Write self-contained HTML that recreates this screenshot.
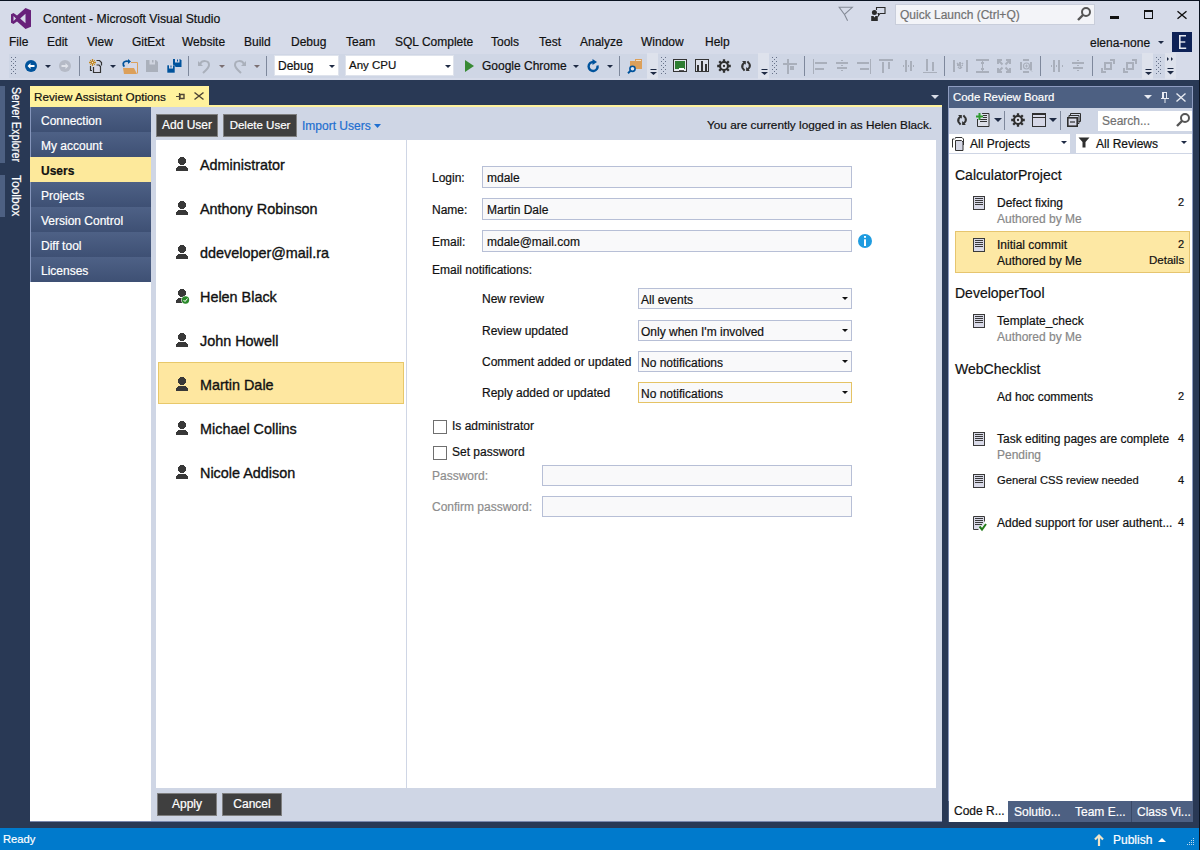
<!DOCTYPE html>
<html><head><meta charset="utf-8">
<style>
*{box-sizing:border-box;margin:0;padding:0}
html,body{width:1200px;height:850px;overflow:hidden}
body{-webkit-text-stroke:0.2px currentColor;position:relative;background:#293955;font-family:"Liberation Sans",sans-serif;font-size:12px;color:#111}
.a{position:absolute}
.t{position:absolute;white-space:nowrap;line-height:1}
svg{position:absolute;overflow:visible}
.menu{top:36px}
.tb{top:54px;height:24px;background:#cfd6e5}
.btn{position:absolute;background:#3f3f3f;border:1px solid #7f7f7f;color:#fff;font-size:12px;text-align:center}
.nav{position:absolute;left:31px;width:120px;height:25px;background:linear-gradient(#4e6186,#3e5074);color:#fff;font-size:12px}
.nav span{position:absolute;left:10px;top:8px;line-height:1;white-space:nowrap}
.uname{position:absolute;left:200px;font-size:14.4px;line-height:1;white-space:nowrap;-webkit-text-stroke:0.35px currentColor}
.lbl{position:absolute;font-size:12px;line-height:1;white-space:nowrap}
.tbox{position:absolute;left:482px;width:370px;height:22px;border:1px solid #b7bfd6;background:#f9f9fa}
.tbox span{position:absolute;left:4px;top:5px;line-height:1;font-size:12px;white-space:nowrap}
.dd{position:absolute;left:638px;width:214px;height:21px;border:1px solid #b7bfd6;background:#f9f9fa}
.dd span{position:absolute;left:2px;top:5px;line-height:1;font-size:12px;white-space:nowrap}
.dd i{position:absolute;left:203px;top:8px;width:0;height:0;border-left:3px solid transparent;border-right:3px solid transparent;border-top:3px solid #111}
.chk{position:absolute;left:433px;width:14px;height:14px;border:1px solid #6f6f6f;background:#fff}
.crbt{position:absolute;font-size:12px;line-height:1;white-space:nowrap}
.gray{color:#888}
.num{position:absolute;left:1178px;font-size:11px;line-height:1}
.arr{position:absolute;width:0;height:0;border-left:3px solid transparent;border-right:3px solid transparent;border-top:3px solid #1e2a44}
.sep{position:absolute;top:56px;width:1px;height:20px;background:#7e889c}
.grip{position:absolute;top:57px;width:6px;height:17px;background-image:radial-gradient(circle,#5f6f8c 0.8px,transparent 1px);background-size:2px 4px}
.dis{color:#a7adba}
</style></head><body>
<svg width="0" height="0" style="position:absolute">
 <defs>
  <symbol id="user" viewBox="0 0 13 15"><path d="M4 0H8V1H9V2H10V6H9V7H8V8H4V7H3V6H2V2H3V1H4Z M2 9H10V10H11V11H12V14H0V11H1V10H2Z" fill="#383838"/></symbol>
  <symbol id="doc" viewBox="0 0 13 15"><rect x="0.5" y="0.5" width="11" height="13" fill="#d9dae8" stroke="#3a3a3a"/><path d="M2 2.5h8M2 4.5h8M2 6.5h8M2 8.5h8" stroke="#3a3a3a"/></symbol>
 </defs>
</svg>

<!-- title & menu -->
<div class="a" style="left:0;top:0;width:1200px;height:80px;background:#d6dbe9"></div>
<div class="a" style="left:0;top:0;width:1200px;height:1px;background:#0a1220"></div>
<svg style="left:11px;top:8px" width="21" height="21" viewBox="0 0 21 21"><path d="M14.5 0 L20 2.2 V18.8 L14.5 21 L6 13.5 L2.5 16 L0 14.8 V6.2 L2.5 5 L6 7.5 Z M14.5 5.8 L9.2 10.5 L14.5 15.2 Z M2.5 8 V13 L5 10.5 Z" fill="#68217a" fill-rule="evenodd"/></svg>
<div class="t" style="left:43px;top:13px;font-size:12.2px">Content - Microsoft Visual Studio</div>

<div class="t menu" style="left:9px">File</div>
<div class="t menu" style="left:47px">Edit</div>
<div class="t menu" style="left:87px">View</div>
<div class="t menu" style="left:132px">GitExt</div>
<div class="t menu" style="left:182px">Website</div>
<div class="t menu" style="left:244px">Build</div>
<div class="t menu" style="left:291px">Debug</div>
<div class="t menu" style="left:346px">Team</div>
<div class="t menu" style="left:395px">SQL Complete</div>
<div class="t menu" style="left:491px">Tools</div>
<div class="t menu" style="left:539px">Test</div>
<div class="t menu" style="left:580px">Analyze</div>
<div class="t menu" style="left:641px">Window</div>
<div class="t menu" style="left:705px">Help</div>

<!-- title right icons -->
<svg style="left:838px;top:6px" width="16" height="16" viewBox="0 0 16 16"><path d="M1.2 1.3H14.3L6.5 8.5ZM6.5 8.5L9.6 14.8" fill="none" stroke="#858b97" stroke-width="1.1"/></svg>
<svg style="left:870px;top:6px" width="17" height="16" viewBox="0 0 17 16"><path d="M6.5 4V1.5H15V7.5H10L8.5 9.5V7.5H7.5" fill="none" stroke="#2a2a2a" stroke-width="1.1"/><circle cx="4.4" cy="6.4" r="2.5" fill="#2a2a2a"/><path d="M1.2 10h2.3l1 1.5l1-1.5h2.3v5h-6.6z" fill="#2a2a2a"/></svg>
<div class="a" style="left:895px;top:4px;width:200px;height:21px;background:#f3f4f8;border:1px solid #c9cedb"></div>
<div class="t" style="left:900px;top:9px;color:#717171">Quick Launch (Ctrl+Q)</div>
<svg style="left:1077px;top:7px" width="14" height="14" viewBox="0 0 14 14"><circle cx="9" cy="5" r="4" fill="none" stroke="#555" stroke-width="2"/><path d="M6 8L1 13" stroke="#555" stroke-width="2.4"/></svg>
<div class="a" style="left:1110px;top:16px;width:9px;height:3px;background:#111"></div>
<div class="a" style="left:1144px;top:10px;width:9px;height:9px;border:1px solid #111;border-top-width:2px"></div>
<svg style="left:1177px;top:11px" width="10" height="8" viewBox="0 0 10 8"><path d="M0.5 0.3L9.5 7.7M9.5 0.3L0.5 7.7" stroke="#111" stroke-width="1.4"/></svg>

<div class="t" style="left:1090px;top:37px">elena-none</div>
<div class="arr" style="left:1158px;top:41px"></div>
<div class="a" style="left:1172px;top:32px;width:20px;height:20px;background:#0e2257"></div>
<svg style="left:1179px;top:35px" width="8" height="14" viewBox="0 0 8 14" fill="#e4e7ef"><rect x="0" y="0" width="1.6" height="14"/><rect x="0" y="0" width="7" height="1.5"/><rect x="0" y="6.3" width="6.3" height="1.4"/><rect x="0" y="12.5" width="7.2" height="1.5"/></svg>

<!-- toolbars -->
<div class="a tb" style="left:9px;width:638px"></div>
<div class="a" style="left:647px;top:53px;width:11px;height:26px;background:#dee2ec"></div>
<div class="a tb" style="left:658px;width:100px"></div>
<div class="a" style="left:758px;top:53px;width:11px;height:26px;background:#dee2ec"></div>
<div class="a tb" style="left:769px;width:373px"></div>
<div class="a" style="left:1142px;top:53px;width:11px;height:26px;background:#dee2ec"></div>
<div class="a tb" style="left:1153px;width:12px"></div>
<div class="a" style="left:1165px;top:53px;width:11px;height:26px;background:#dee2ec"></div>

<svg style="left:11px;top:57px" width="6" height="17" viewBox="0 0 6 17" fill="#67728a"><rect x="0" y="0" width="1" height="1"/><rect x="4" y="0" width="1" height="1"/><rect x="2" y="2" width="1" height="1"/><rect x="0" y="4" width="1" height="1"/><rect x="4" y="4" width="1" height="1"/><rect x="2" y="6" width="1" height="1"/><rect x="0" y="8" width="1" height="1"/><rect x="4" y="8" width="1" height="1"/><rect x="2" y="10" width="1" height="1"/><rect x="0" y="12" width="1" height="1"/><rect x="4" y="12" width="1" height="1"/><rect x="2" y="14" width="1" height="1"/><rect x="0" y="16" width="1" height="1"/><rect x="4" y="16" width="1" height="1"/></svg>
<svg style="left:661px;top:57px" width="6" height="17" viewBox="0 0 6 17" fill="#67728a"><rect x="0" y="0" width="1" height="1"/><rect x="4" y="0" width="1" height="1"/><rect x="2" y="2" width="1" height="1"/><rect x="0" y="4" width="1" height="1"/><rect x="4" y="4" width="1" height="1"/><rect x="2" y="6" width="1" height="1"/><rect x="0" y="8" width="1" height="1"/><rect x="4" y="8" width="1" height="1"/><rect x="2" y="10" width="1" height="1"/><rect x="0" y="12" width="1" height="1"/><rect x="4" y="12" width="1" height="1"/><rect x="2" y="14" width="1" height="1"/><rect x="0" y="16" width="1" height="1"/><rect x="4" y="16" width="1" height="1"/></svg>
<svg style="left:772px;top:57px" width="6" height="17" viewBox="0 0 6 17" fill="#67728a"><rect x="0" y="0" width="1" height="1"/><rect x="4" y="0" width="1" height="1"/><rect x="2" y="2" width="1" height="1"/><rect x="0" y="4" width="1" height="1"/><rect x="4" y="4" width="1" height="1"/><rect x="2" y="6" width="1" height="1"/><rect x="0" y="8" width="1" height="1"/><rect x="4" y="8" width="1" height="1"/><rect x="2" y="10" width="1" height="1"/><rect x="0" y="12" width="1" height="1"/><rect x="4" y="12" width="1" height="1"/><rect x="2" y="14" width="1" height="1"/><rect x="0" y="16" width="1" height="1"/><rect x="4" y="16" width="1" height="1"/></svg>
<svg style="left:1156px;top:57px" width="6" height="17" viewBox="0 0 6 17" fill="#67728a"><rect x="0" y="0" width="1" height="1"/><rect x="4" y="0" width="1" height="1"/><rect x="2" y="2" width="1" height="1"/><rect x="0" y="4" width="1" height="1"/><rect x="4" y="4" width="1" height="1"/><rect x="2" y="6" width="1" height="1"/><rect x="0" y="8" width="1" height="1"/><rect x="4" y="8" width="1" height="1"/><rect x="2" y="10" width="1" height="1"/><rect x="0" y="12" width="1" height="1"/><rect x="4" y="12" width="1" height="1"/><rect x="2" y="14" width="1" height="1"/><rect x="0" y="16" width="1" height="1"/><rect x="4" y="16" width="1" height="1"/></svg>

<!-- tb1 icons -->
<svg style="left:25px;top:60px" width="12" height="12" viewBox="0 0 12 12"><circle cx="6" cy="6" r="6" fill="#00539c"/><path d="M2.5 6L5.5 3V5H9.5V7H5.5V9z" fill="#fff"/></svg>
<div class="arr" style="left:45px;top:65px"></div>
<svg style="left:59px;top:60px" width="12" height="12" viewBox="0 0 12 12"><circle cx="6" cy="6" r="6" fill="#b5bac6"/><path d="M9.5 6L6.5 3V5H2.5V7H6.5V9z" fill="#e0e3ea"/></svg>
<div class="sep" style="left:79px"></div>
<svg style="left:89px;top:59px" width="14" height="15" viewBox="0 0 14 15"><path d="M3.5 0v7M0 3.5h7" stroke="#c4861c" stroke-width="1.3"/><circle cx="3.5" cy="3.5" r="1.8" fill="#c4861c"/><circle cx="3.5" cy="3.5" r="0.7" fill="#e8e8ee"/><path d="M1.2 1.2l0.6 0.6M5.8 1.2l-0.6 0.6M1.2 5.8l0.6-0.6M5.8 5.8l-0.6-0.6" stroke="#c4861c" stroke-width="1.2"/><path d="M7.5 1.5H10.5L12.5 3.5V6.5" fill="none" stroke="#333" stroke-width="1.2"/><path d="M1.5 7V11.5H3" fill="none" stroke="#333" stroke-width="1.2"/><path d="M4.5 8V13.5H11.5V7.5L10 6H7.5" fill="#d6d8e6" stroke="#333" stroke-width="1.2"/></svg>
<div class="arr" style="left:110px;top:65px"></div>
<svg style="left:122px;top:59px" width="16" height="15" viewBox="0 0 16 15"><path d="M6 3.5h9.5v11h-9.5z" fill="#d6d8e6"/><path d="M9 3.5h6.5v11" fill="none" stroke="#dca05a"/><path d="M1 9h11l3 6h-13z" fill="#dca05a"/><path d="M2.5 7.5C0.5 6 1 3 3 2.5C4.5 1.8 6 2.2 7 2.5" fill="none" stroke="#00539c" stroke-width="1.8"/><path d="M6 0l3 2.5l-3 2.5z" fill="#00539c"/></svg>
<svg style="left:146px;top:60px" width="12" height="12" viewBox="0 0 12 12"><path d="M0 0h10l2 2v10h-12z" fill="#aab0bb"/><path d="M3.5 0h5.5v4.5h-5.5z" fill="#d0d5e0"/><path d="M6 0h1.5v2.5h-1.5z" fill="#aab0bb"/></svg>
<svg style="left:167px;top:59px" width="15" height="15" viewBox="0 0 15 15"><path d="M6 0h7l1.5 1.5v6.5h-8.5z" fill="#00539c"/><path d="M8 0h4.5v3.5h-4.5z" fill="#d6d8e6"/><path d="M10 0.5h1v2h-1z" fill="#00539c"/><path d="M0 6h6.5l1.5 1.5v6.5h-8z" fill="#00539c" stroke="#d6dbe9" stroke-width="0.6"/><path d="M2 6h4v3.5h-4z" fill="#d6d8e6"/><path d="M3.5 6.5h1v2h-1z" fill="#00539c"/></svg>
<div class="sep" style="left:188px"></div>
<svg style="left:198px;top:59px" width="13" height="15" viewBox="0 0 13 15"><path d="M2 5C4 1 11 1 11 6C11 9 8 11 5 14" fill="none" stroke="#aab0bb" stroke-width="2"/><path d="M0 2l0 5l5 0z" fill="#aab0bb"/></svg>
<div class="arr" style="left:219px;top:65px;border-top-color:#7b6f72"></div>
<svg style="left:233px;top:59px" width="13" height="15" viewBox="0 0 13 15"><path d="M11 5C9 1 2 1 2 6C2 9 5 11 8 14" fill="none" stroke="#aab0bb" stroke-width="2"/><path d="M13 2l0 5l-5 0z" fill="#aab0bb"/></svg>
<div class="arr" style="left:254px;top:65px;border-top-color:#7b6f72"></div>
<div class="sep" style="left:266px"></div>

<div class="a" style="left:274px;top:55px;width:65px;height:21px;background:#fff;border:1px solid #dfe3ec"></div>
<div class="t" style="left:278px;top:60px">Debug</div>
<div class="arr" style="left:329px;top:65px"></div>
<div class="a" style="left:345px;top:55px;width:109px;height:21px;background:#fff;border:1px solid #dfe3ec"></div>
<div class="t" style="left:349px;top:60px;font-size:11.5px">Any CPU</div>
<div class="arr" style="left:445px;top:65px"></div>

<svg style="left:465px;top:60px" width="9" height="12" viewBox="0 0 9 12"><path d="M0 0L9 6L0 12z" fill="#388a34"/></svg>
<div class="t" style="left:482px;top:60px">Google Chrome</div>
<div class="arr" style="left:573px;top:65px"></div>
<svg style="left:587px;top:59px" width="13" height="14" viewBox="0 0 13 14"><path d="M10.5 6.5A4.5 4.5 0 1 1 6.5 3" fill="none" stroke="#00539c" stroke-width="2.4"/><path d="M5.5 0l4.5 3l-4.5 3z" fill="#00539c"/></svg>
<div class="arr" style="left:607px;top:65px"></div>
<div class="sep" style="left:619px"></div>
<svg style="left:627px;top:59px" width="16" height="15" viewBox="0 0 16 15"><path d="M3 2h5v-2h7v10h-12z" fill="#dca05a"/><path d="M9 1.5h5" stroke="#f3e0c6"/><circle cx="5.5" cy="9.8" r="2.6" fill="#e2e5ee" stroke="#00539c" stroke-width="1.6"/><path d="M3.6 11.8L1 14.3" stroke="#00539c" stroke-width="1.9"/></svg>
<svg style="left:650px;top:69px" width="7" height="7" viewBox="0 0 7 7"><path d="M0.5 0.5h6" stroke="#1e2a44"/><path d="M0 3h7l-3.5 3z" fill="#1e2a44"/></svg>

<!-- tb2 -->
<svg style="left:673px;top:59px" width="14" height="13" viewBox="0 0 14 13"><rect x="0.5" y="0.5" width="13" height="12" fill="#e4e7ee" stroke="#333"/><rect x="2" y="2" width="10" height="8" fill="#2e7d32"/><rect x="6" y="9" width="5" height="2" fill="#fff"/><path d="M6 11.5h5" stroke="#333" stroke-width="0.8"/></svg>
<svg style="left:695px;top:59px" width="14" height="13" viewBox="0 0 14 13"><rect x="0.5" y="0.5" width="13" height="12" fill="#dcdfe8" stroke="#333"/><path d="M2 6h2v6h-2zM6 2h2v10h-2zM10 5h2v7h-2z" fill="#333"/></svg>
<svg style="left:717px;top:59px" width="14" height="14" viewBox="0 0 14 14"><circle cx="7" cy="7" r="5" fill="#2f2f2f"/><path d="M7 0.2v3M7 10.8v3M0.2 7h3M10.8 7h3M2.2 2.2l2 2M11.8 11.8l-2-2M11.8 2.2l-2 2M2.2 11.8l2-2" stroke="#2f2f2f" stroke-width="2.3"/><circle cx="7" cy="7" r="2.9" fill="#dde0ea"/><circle cx="7" cy="7" r="1.15" fill="#2f2f2f"/></svg>
<svg style="left:741px;top:61px" width="11" height="11" viewBox="0 0 11 11"><path d="M3.6 1.5Q0.3 4 1.4 6.8L3.6 9.6" fill="none" stroke="#333" stroke-width="2"/><path d="M1 0H4.8V3.8Z" fill="#333"/><path d="M6.4 0.4L8.6 3.2Q9.8 6 6.4 8.6" fill="none" stroke="#333" stroke-width="2"/><path d="M5.1 6.1V9.9H8.9Z" fill="#333"/></svg>
<svg style="left:761px;top:69px" width="7" height="7" viewBox="0 0 7 7"><path d="M0.5 0.5h6" stroke="#1e2a44"/><path d="M0 3h7l-3.5 3z" fill="#1e2a44"/></svg>

<!-- tb3 layout icons (disabled) -->
<svg style="left:0;top:0" width="1200" height="80" viewBox="0 0 1200 80" fill="#a9afbb">
 <path d="M787 59h2v15h-2zM783 63h14v2h-14zM790 66h4v4h-4z"/>
 <rect x="804" y="56" width="1" height="20" fill="#7e889c"/>
 <path d="M813 59h1v15h-1zM815 62h12v2h-12zM815 68h9v2h-9z"/>
 <path d="M836 62h12v2h-12zM837 67h10v2h-10zM841 60h2v1h-2zM841 65h2v1h-2zM841 70h2v1h-2z"/>
 <path d="M857 62h12v2h-12zM860 68h9v2h-9zM870 59h1v15h-1z"/>
 <path d="M879 59h14v2h-14zM882 62h2v11h-2zM888 62h2v7h-2z"/>
 <path d="M905 60h2v12h-2zM910 61h2v10h-2zM903 65h1v2h-1zM908 65h1v2h-1zM913 65h1v2h-1z"/>
 <path d="M926 59h2v12h-2zM932 62h2v9h-2zM923 72h14v1h-14z"/>
 <rect x="944" y="56" width="1" height="20" fill="#7e889c"/>
 <path d="M953 60h2v12h-2zM966 60h2v12h-2zM959 62h2v7h-2zM957 64h6v2h-6zM957.5 62.5l5 5l-1 1l-5-5zM962.5 62.5l-5 5l1 1l5-5z"/>
 <path d="M976 59h13v2h-13zM976 71h13v2h-13zM982 61h1v10h-1zM981 62h3v2h-3zM981 68h3v2h-3z"/>
 <path d="M997 59h5v2h-3v3h-2zM1011 59h-5v2h3v3h2zM997 73h5v-2h-3v-3h-2zM1011 73h-5v-2h3v-3h2z"/><path d="M999 61l3.5 3.5M1009 61l-3.5 3.5M999 71l3.5-3.5M1009 71l-3.5-3.5" stroke="#a9afbb" stroke-width="2"/>
 <path d="M1023 59h6v2h-6zM1023 71h6v2h-6zM1020 62h2v8h-2zM1030 62h2v8h-2z"/>
 <circle cx="1026.5" cy="66" r="3" fill="none" stroke="#a9afbb" stroke-width="1.2"/><path d="M1026.5 64.5v3M1025 66h3M1029 68.5l3 3" stroke="#a9afbb"/>
 <rect x="1040" y="56" width="1" height="20" fill="#7e889c"/>
 <path d="M1053 60h2v12h-2zM1058 60h2v12h-2zM1051 65h1v2h-1zM1056 65h1v2h-1zM1062 65h1v2h-1z"/>
 <path d="M1072 62h12v2h-12zM1073 67h10v2h-10zM1077 60h2v1h-2zM1077 65h2v1h-2zM1077 70h2v1h-2z"/>
 <rect x="1092" y="56" width="1" height="20" fill="#7e889c"/>
 <path d="M1104 62h8v8h-8zM1106 64v4h4v-4zM1110 59h5v5h-2v-3h-3zM1101 68h2v3h3v2h-5z"/>
 <path d="M1126 62h8v8h-8zM1128 64v4h4v-4zM1132 59h5v5h-2v-3h-3zM1123 68h2v3h3v2h-5z"/>
</svg>
<svg style="left:1145px;top:69px" width="7" height="7" viewBox="0 0 7 7"><path d="M0.5 0.5h6" stroke="#1e2a44"/><path d="M0 3h7l-3.5 3z" fill="#1e2a44"/></svg>
<svg style="left:1167px;top:57px" width="7" height="18" viewBox="0 0 7 18"><path d="M0 0l2 2l-2 2zM4 0l2 2l-2 2z" fill="#1e2a44"/><path d="M0.5 11.5h6" stroke="#1e2a44"/><path d="M0 14h7l-3.5 3.5z" fill="#1e2a44"/></svg>

<!-- left sidebar -->
<div class="a" style="left:0;top:86px;width:5px;height:77px;background:#4d6082"></div>
<div class="a" style="left:0;top:175px;width:5px;height:42px;background:#4d6082"></div>
<div class="t" style="left:22px;top:87px;color:#fff;transform-origin:0 0;transform:rotate(90deg) scaleX(0.9)">Server Explorer</div>
<div class="t" style="left:22px;top:175px;color:#fff;transform-origin:0 0;transform:rotate(90deg)">Toolbox</div>

<!-- doc tab -->
<div class="a" style="left:30px;top:86px;width:179px;height:21px;background:#fff29d"></div>
<div class="a" style="left:30px;top:105px;width:912px;height:2px;background:#fff29d"></div>
<div class="t" style="left:34px;top:91px;font-size:11.7px">Review Assistant Options</div>
<svg style="left:176px;top:93px" width="9" height="7" viewBox="0 0 9 7"><path d="M0 3.5h3.5M3.5 0v7" fill="none" stroke="#4f4636" stroke-width="1.2"/><path d="M4 1.5h4v4h-4z" fill="none" stroke="#4f4636" stroke-width="1.4"/></svg>
<svg style="left:194px;top:92px" width="10" height="8" viewBox="0 0 10 8"><path d="M0.5 0.5L9.5 7.5M9.5 0.5L0.5 7.5" stroke="#4f4636" stroke-width="1.5"/></svg>
<svg style="left:931px;top:95px" width="8" height="4" viewBox="0 0 8 4"><path d="M0 0h8l-4 4z" fill="#d8dce6"/></svg>

<!-- doc content -->
<div class="a" style="left:30px;top:107px;width:912px;height:715px;background:#cfd6e5;border-bottom:1px solid #7a88ad"></div>
<div class="a" style="left:30px;top:107px;width:1px;height:175px;background:#8595bb"></div>
<div class="a" style="left:30px;top:282px;width:121px;height:539px;background:#fff"></div>
<div class="nav" style="top:107px"><span>Connection</span></div>
<div class="nav" style="top:132px"><span>My account</span></div>
<div class="nav" style="top:157px;left:30px;width:121px;background:#fde99b;color:#111;font-weight:bold"><span style="left:11px">Users</span></div>
<div class="nav" style="top:182px"><span>Projects</span></div>
<div class="nav" style="top:207px"><span>Version Control</span></div>
<div class="nav" style="top:232px"><span>Diff tool</span></div>
<div class="nav" style="top:257px"><span>Licenses</span></div>

<div class="btn" style="left:156px;top:114px;width:62px;height:23px;line-height:21px">Add User</div>
<div class="btn" style="left:223px;top:114px;width:74px;height:23px;line-height:21px;font-size:11.5px">Delete User</div>
<div class="t" style="left:302px;top:120px;color:#1e6fd0">Import Users</div>
<svg style="left:374px;top:124px" width="7" height="4" viewBox="0 0 7 4"><path d="M0 0h7l-3.5 4z" fill="#1e6fd0"/></svg>
<div class="t" style="left:707px;top:120px;font-size:11.8px">You are currently logged in as Helen Black.</div>

<div class="a" style="left:156px;top:140px;width:250px;height:648px;background:#fff"></div>
<div class="a" style="left:407px;top:140px;width:529px;height:648px;background:#fff"></div>

<div class="a" style="left:158px;top:362px;width:246px;height:42px;background:#fee7a0;border:1px solid #e8c86a"></div>
<svg style="left:176px;top:157px" width="13" height="15"><use href="#user"/></svg>
<svg style="left:176px;top:201px" width="13" height="15"><use href="#user"/></svg>
<svg style="left:176px;top:245px" width="13" height="15"><use href="#user"/></svg>
<svg style="left:176px;top:289px" width="13" height="15" viewBox="0 0 13 15"><path d="M4 0H8V1H9V2H10V6H9V7H8V8H4V7H3V6H2V2H3V1H4Z M2 9H10V10H11V11H12V14H0V11H1V10H2Z" fill="#383838"/><circle cx="9.5" cy="11" r="4.3" fill="#fff"/><circle cx="9.5" cy="11" r="3.7" fill="#2a8a2a"/><path d="M7.5 11l1.5 1.5l2.5-3" fill="none" stroke="#fff" stroke-width="1"/></svg>
<svg style="left:176px;top:333px" width="13" height="15"><use href="#user"/></svg>
<svg style="left:176px;top:377px" width="13" height="15"><use href="#user"/></svg>
<svg style="left:176px;top:421px" width="13" height="15"><use href="#user"/></svg>
<svg style="left:176px;top:465px" width="13" height="15"><use href="#user"/></svg>
<div class="uname" style="top:158px">Administrator</div>
<div class="uname" style="top:202px">Anthony Robinson</div>
<div class="uname" style="top:246px">ddeveloper@mail.ra</div>
<div class="uname" style="top:290px">Helen Black</div>
<div class="uname" style="top:334px">John Howell</div>
<div class="uname" style="top:378px">Martin Dale</div>
<div class="uname" style="top:422px">Michael Collins</div>
<div class="uname" style="top:466px">Nicole Addison</div>

<!-- form -->
<div class="lbl" style="left:432px;top:172px">Login:</div>
<div class="tbox" style="top:166px"><span>mdale</span></div>
<div class="lbl" style="left:432px;top:204px">Name:</div>
<div class="tbox" style="top:198px"><span>Martin Dale</span></div>
<div class="lbl" style="left:432px;top:236px">Email:</div>
<div class="tbox" style="top:230px"><span>mdale@mail.com</span></div>
<svg style="left:858px;top:234px" width="14" height="14" viewBox="0 0 14 14"><circle cx="7" cy="7" r="7" fill="#1f9ce0"/><rect x="6" y="5.3" width="2" height="6.7" fill="#fff"/><rect x="6" y="2" width="2" height="1.8" fill="#fff"/></svg>
<div class="lbl" style="left:432px;top:264px">Email notifications:</div>

<div class="lbl" style="left:482px;top:293px">New review</div>
<div class="dd" style="top:288px"><span>All events</span><i></i></div>
<div class="lbl" style="left:482px;top:325px">Review updated</div>
<div class="dd" style="top:320px"><span>Only when I'm involved</span><i></i></div>
<div class="lbl" style="left:482px;top:356px">Comment added or updated</div>
<div class="dd" style="top:351px"><span>No notifications</span><i></i></div>
<div class="lbl" style="left:482px;top:387px">Reply added or updated</div>
<div class="dd" style="top:382px;border-color:#e5c365"><span>No notifications</span><i></i></div>

<div class="chk" style="top:420px"></div>
<div class="lbl" style="left:452px;top:420px">Is administrator</div>
<div class="chk" style="top:446px"></div>
<div class="lbl" style="left:452px;top:446px">Set password</div>
<div class="lbl" style="left:432px;top:470px;color:#8d8d8d">Password:</div>
<div class="a" style="left:542px;top:465px;width:310px;height:21px;border:1px solid #b7bfd6;background:#f9f9fa"></div>
<div class="lbl" style="left:432px;top:501px;color:#8d8d8d">Confirm password:</div>
<div class="a" style="left:542px;top:496px;width:310px;height:21px;border:1px solid #b7bfd6;background:#f9f9fa"></div>

<div class="btn" style="left:157px;top:793px;width:60px;height:23px;line-height:21px">Apply</div>
<div class="btn" style="left:222px;top:793px;width:60px;height:23px;line-height:21px">Cancel</div>

<!-- code review board -->
<div class="a" style="left:948px;top:86px;width:245px;height:716px;background:#8e9cc0"></div><div class="a" style="left:949px;top:87px;width:243px;height:21px;background:#4d6082"></div><div class="a" style="left:948px;top:801px;width:245px;height:21px;background:#4d6082"></div>
<div class="t" style="left:953px;top:92px;color:#fff;font-size:11.4px">Code Review Board</div>
<svg style="left:1144px;top:95px" width="8" height="4" viewBox="0 0 8 4"><path d="M0 0h8l-4 4z" fill="#e8ebf2"/></svg>
<svg style="left:1161px;top:92px" width="8" height="12" viewBox="0 0 8 12"><path d="M1 0h5v6h-1v-5h-2v5h-2z" fill="#e8ebf2"/><path d="M0 6h8v1h-8zM3.5 7h1v4h-1z" fill="#e8ebf2"/></svg>
<svg style="left:1176px;top:93px" width="10" height="9" viewBox="0 0 10 9"><path d="M0.5 0.5L9.5 8.5M9.5 0.5L0.5 8.5" stroke="#e8ebf2" stroke-width="1.4"/></svg>
<div class="a" style="left:949px;top:108px;width:243px;height:26px;background:#cfd6e5"></div>
<svg style="left:957px;top:115px" width="11" height="11" viewBox="0 0 11 11"><path d="M3.6 1.5Q0.3 4 1.4 6.8L3.6 9.6" fill="none" stroke="#333" stroke-width="2"/><path d="M1 0H4.8V3.8Z" fill="#333"/><path d="M6.4 0.4L8.6 3.2Q9.8 6 6.4 8.6" fill="none" stroke="#333" stroke-width="2"/><path d="M5.1 6.1V9.9H8.9Z" fill="#333"/></svg>
<svg style="left:976px;top:113px" width="14" height="14" viewBox="0 0 14 14"><path d="M1.5 6v7.5h11.5v-13h-7" fill="#dcdfe8" stroke="#333"/><path d="M1.5 6h5v-5.5" fill="#dcdfe8"/><path d="M7 2.5h4M7 4.5h4M4 6.5h7M4 8.5h7" stroke="#333"/><path d="M3.5 0v7M0 3.5h7" stroke="#2e9a2e" stroke-width="2"/></svg>
<svg style="left:994px;top:118px" width="8" height="4" viewBox="0 0 8 4"><path d="M0 0h8l-4 4z" fill="#1e2a44"/></svg>
<div class="a" style="left:1004px;top:111px;width:1px;height:19px;background:#7e889c"></div>
<svg style="left:1011px;top:113px" width="14" height="14" viewBox="0 0 14 14"><circle cx="7" cy="7" r="5" fill="#2f2f2f"/><path d="M7 0.2v3M7 10.8v3M0.2 7h3M10.8 7h3M2.2 2.2l2 2M11.8 11.8l-2-2M11.8 2.2l-2 2M2.2 11.8l2-2" stroke="#2f2f2f" stroke-width="2.3"/><circle cx="7" cy="7" r="2.9" fill="#dde0ea"/><circle cx="7" cy="7" r="1.15" fill="#2f2f2f"/></svg>
<svg style="left:1032px;top:113px" width="15" height="14" viewBox="0 0 15 14"><rect x="0.5" y="0.5" width="13" height="13" fill="#d6d8e6" stroke="#2f2f2f"/><rect x="0" y="0" width="14" height="2" fill="#2f2f2f"/><path d="M0.5 4.5h13" stroke="#2f2f2f"/></svg>
<svg style="left:1049px;top:118px" width="8" height="4" viewBox="0 0 8 4"><path d="M0 0h8l-4 4z" fill="#1e2a44"/></svg>
<div class="a" style="left:1060px;top:111px;width:1px;height:19px;background:#7e889c"></div>
<svg style="left:1067px;top:113px" width="15" height="14" viewBox="0 0 15 14"><path d="M3.5 2.5v-2h10v8h-2M2 4v-1.5h10v8h-1" fill="none" stroke="#2f2f2f"/><rect x="0.8" y="4.8" width="9.4" height="8.4" fill="#d6d8e6" stroke="#2f2f2f" stroke-width="1.6"/><path d="M3 9h5" stroke="#2f2f2f" stroke-width="1.2"/></svg>
<div class="a" style="left:1098px;top:111px;width:94px;height:20px;background:#fff"></div>
<div class="t" style="left:1102px;top:115px;color:#717171">Search...</div>
<svg style="left:1176px;top:113px" width="14" height="14" viewBox="0 0 14 14"><circle cx="9" cy="5" r="4" fill="none" stroke="#555" stroke-width="2"/><path d="M6 8L1 13" stroke="#555" stroke-width="2.4"/></svg>
<div class="a" style="left:949px;top:134px;width:243px;height:20px;background:#cfd6e5"></div>
<div class="a" style="left:949px;top:134px;width:121px;height:19px;background:#fff"></div>
<div class="a" style="left:1076px;top:134px;width:116px;height:19px;background:#fff"></div>
<svg style="left:952px;top:137px" width="13" height="14" viewBox="0 0 13 14"><path d="M0.5 10.5v-8.5h2M3.5 1.5v-1h6.5l1.5 1.5v6" fill="none" stroke="#333"/><path d="M3.5 3.5h6l1.5 1.5v8.5h-7.5z" fill="#d6d8e6" stroke="#333"/></svg>
<div class="t" style="left:970px;top:138px">All Projects</div>
<div class="arr" style="left:1061px;top:141px"></div>
<svg style="left:1078px;top:137px" width="12" height="11" viewBox="0 0 12 11"><path d="M0.5 0.5h11l-4 4.5v5.5h-3v-5.5z" fill="#2f2f2f"/></svg>
<div class="t" style="left:1096px;top:138px">All Reviews</div>
<div class="arr" style="left:1181px;top:141px"></div>
<div class="a" style="left:949px;top:154px;width:243px;height:647px;background:#fff"></div>
<div class="a" style="left:949px;top:801px;width:59px;height:21px;background:#fff"></div>

<div class="t" style="left:955px;top:168px;font-size:14px">CalculatorProject</div>
<svg style="left:973px;top:196px" width="13" height="15"><use href="#doc"/></svg>
<div class="crbt" style="left:997px;top:197px">Defect fixing</div>
<div class="crbt gray" style="left:997px;top:213px">Authored by Me</div>
<div class="num" style="top:197px">2</div>
<div class="a" style="left:955px;top:231px;width:235px;height:42px;background:#fde8a4;border:1px solid #e6c56f"></div>
<svg style="left:973px;top:238px" width="13" height="15"><use href="#doc"/></svg>
<div class="crbt" style="left:997px;top:239px">Initial commit</div>
<div class="crbt" style="left:997px;top:255px">Authored by Me</div>
<div class="num" style="top:239px">2</div>
<div class="crbt" style="left:1149px;top:255px;font-size:11.5px">Details</div>

<div class="t" style="left:955px;top:286px;font-size:14px">DeveloperTool</div>
<svg style="left:973px;top:314px" width="13" height="15"><use href="#doc"/></svg>
<div class="crbt" style="left:997px;top:315px">Template_check</div>
<div class="crbt gray" style="left:997px;top:331px">Authored by Me</div>
<div class="t" style="left:955px;top:362px;font-size:14px">WebChecklist</div>
<div class="crbt" style="left:997px;top:391px">Ad hoc comments</div>
<div class="num" style="top:391px">2</div>
<svg style="left:973px;top:432px" width="13" height="15"><use href="#doc"/></svg>
<div class="crbt" style="left:997px;top:433px">Task editing pages are complete</div>
<div class="crbt gray" style="left:997px;top:449px">Pending</div>
<div class="num" style="top:433px">4</div>
<svg style="left:973px;top:474px" width="13" height="15"><use href="#doc"/></svg>
<div class="crbt" style="left:997px;top:475px;font-size:11.2px">General CSS review needed</div>
<div class="num" style="top:475px">4</div>
<svg style="left:973px;top:516px" width="14" height="15" viewBox="0 0 14 15"><path d="M0.5 0.5h11v12.5h-11z" fill="#d9dae8"/><path d="M5.5 13.5h-5v-13h11v5" fill="none" stroke="#3a3a3a"/><path d="M2 2.5h8M2 4.5h8M2 6.5h8M2 8.5h7" stroke="#3a3a3a"/><path d="M6.5 10.5l2.5 3l4-5.5" fill="none" stroke="#fff" stroke-width="3.2"/><path d="M6.5 10.5l2.5 3l4-5.5" fill="none" stroke="#237a1a" stroke-width="2"/></svg>
<div class="crbt" style="left:997px;top:517px">Added support for user authent...</div>
<div class="num" style="top:517px">4</div>

<div class="t" style="left:954px;top:805px">Code R...</div>
<div class="t" style="left:1014px;top:806px;color:#fff">Solutio...</div>
<div class="t" style="left:1075px;top:806px;color:#fff">Team E...</div>
<div class="a" style="left:1131px;top:801px;width:1px;height:21px;background:#3a4a68"></div>
<div class="t" style="left:1137px;top:806px;color:#fff">Class Vi...</div>

<!-- status bar -->
<div class="a" style="left:0;top:828px;width:1200px;height:22px;background:#007acc"></div>
<div class="t" style="left:3px;top:834px;color:#fff;font-size:11.2px">Ready</div>
<svg style="left:1094px;top:834px" width="10" height="12" viewBox="0 0 10 12"><path d="M5 1.5v10.5" stroke="#efe4c8" stroke-width="2.2"/><path d="M1 5.5l4-4l4 4" fill="none" stroke="#efe4c8" stroke-width="2.2"/></svg>
<div class="t" style="left:1113px;top:834px;color:#fff">Publish</div>
<svg style="left:1158px;top:838px" width="8" height="4" viewBox="0 0 8 4"><path d="M0 4h8l-4-4z" fill="#fff"/></svg>
<svg style="left:1187px;top:838px" width="8" height="8" viewBox="0 0 8 8" fill="#bcd8ee"><rect x="6" y="0" width="1" height="1"/><rect x="4" y="2" width="1" height="1"/><rect x="6" y="2" width="1" height="1"/><rect x="2" y="4" width="1" height="1"/><rect x="4" y="4" width="1" height="1"/><rect x="6" y="4" width="1" height="1"/><rect x="0" y="6" width="1" height="1"/><rect x="2" y="6" width="1" height="1"/><rect x="4" y="6" width="1" height="1"/><rect x="6" y="6" width="1" height="1"/></svg>

<div class="a" style="left:1199px;top:0;width:1px;height:850px;background:#0a1220"></div>
</body></html>
